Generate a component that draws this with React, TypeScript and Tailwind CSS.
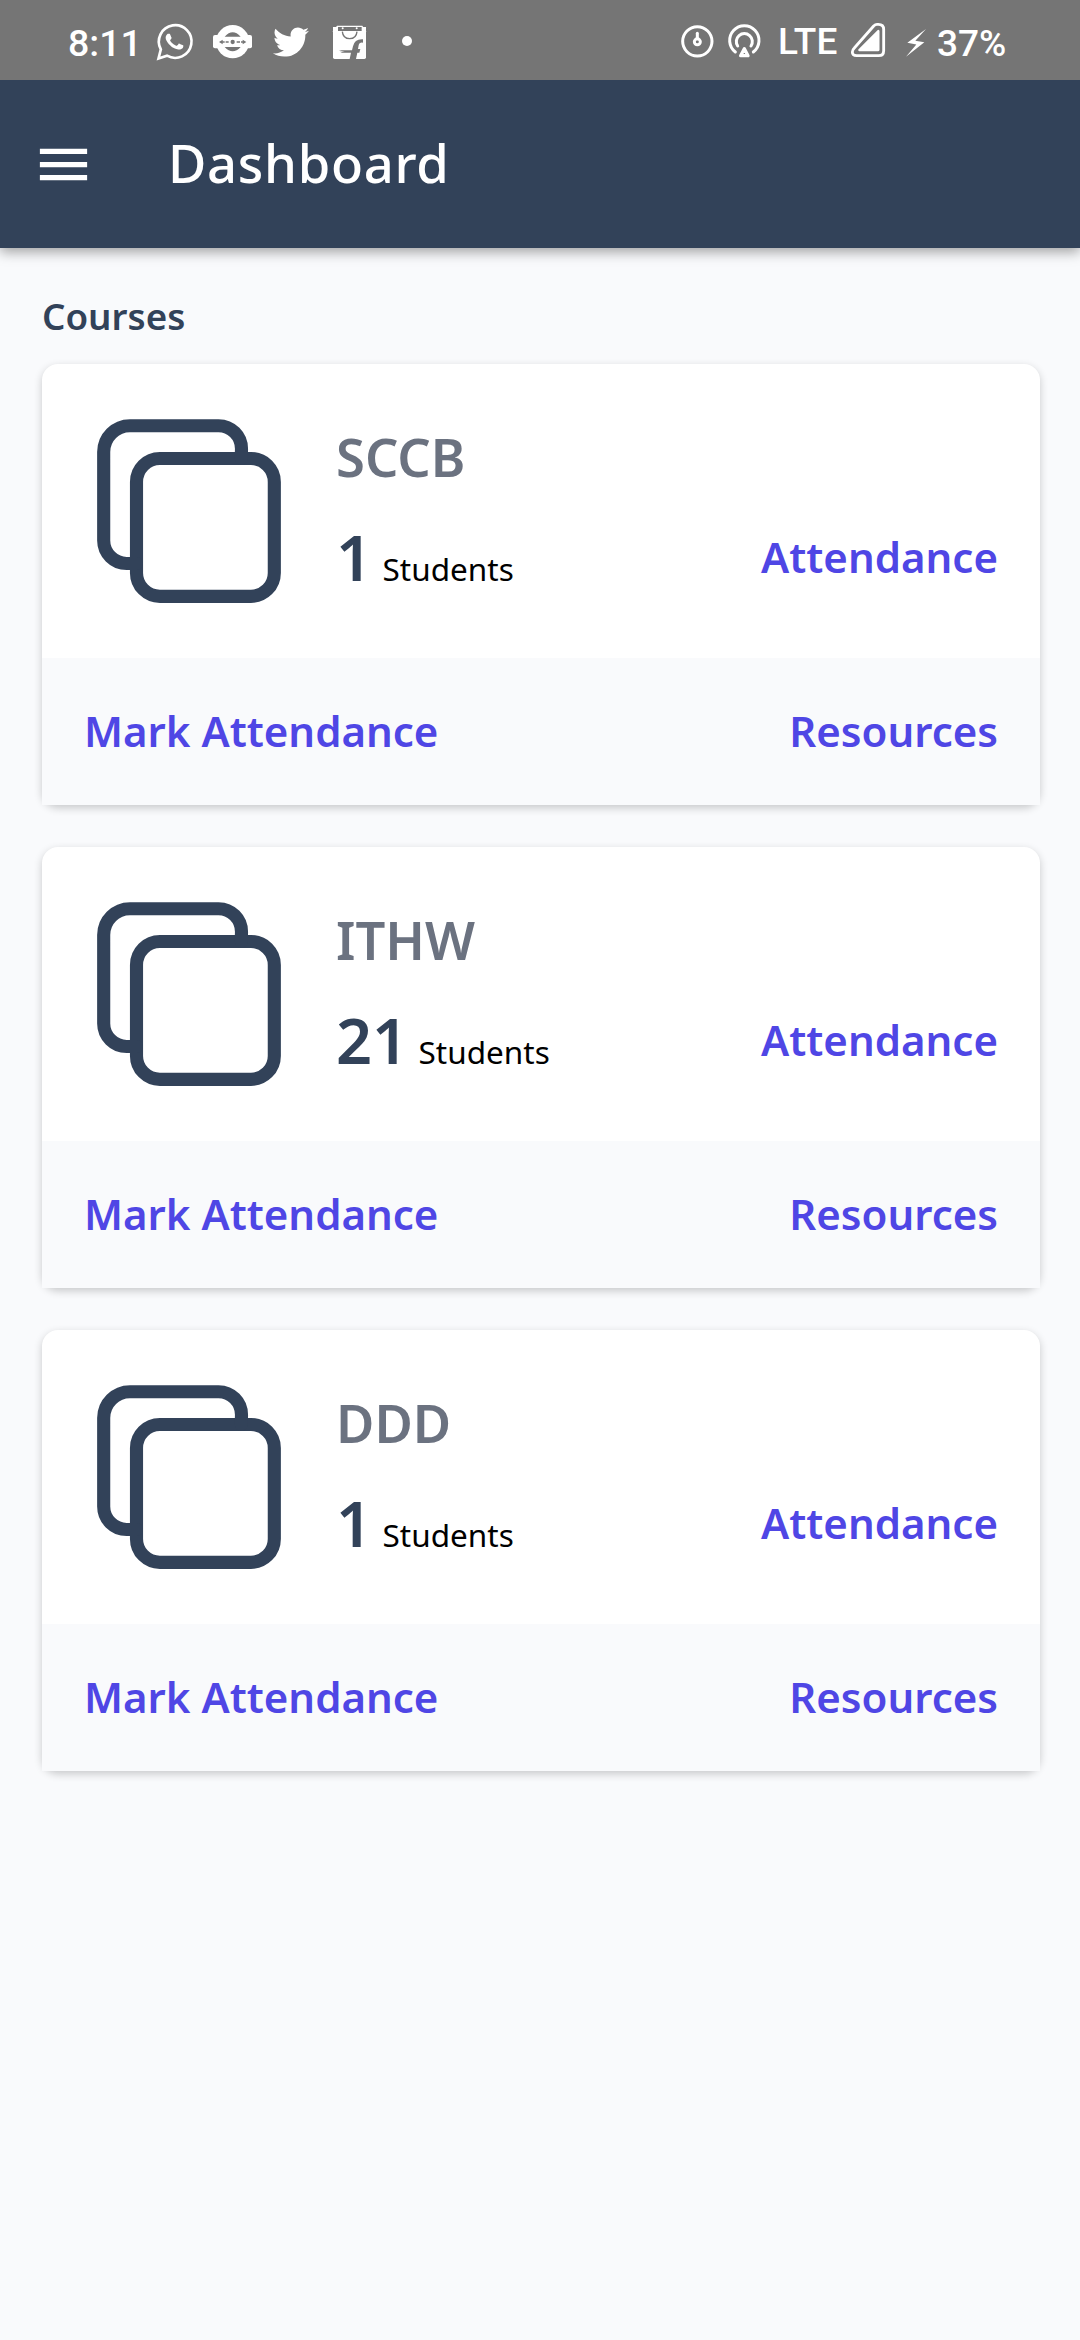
import React from 'react';
import { FaTwitter } from 'react-icons/fa';

interface Course {
  id: number;
  name: string;
  students: number;
}

const courses: Course[] = [
  { id: 1, name: 'SCCB', students: 1 },
  { id: 2, name: 'ITHW', students: 21 },
  { id: 3, name: 'DDD', students: 1 },
];

const WhatsAppIcon = () => (
  <svg viewBox="0 0 120 120" className="mt-[22px] h-10 w-10 shrink-0">
    <path
      d="M10.5 109.5 17.5 82A49 49 0 1 1 36 101Z"
      fill="none"
      stroke="white"
      strokeWidth="8"
    />
    <path
      transform="translate(5.5 8) scale(4.4 4.25)"
      fill="white"
      d="M17.472 14.382c-.297-.149-1.758-.867-2.03-.967-.273-.099-.471-.148-.67.15-.197.297-.767.966-.94 1.164-.173.199-.347.223-.644.075-.297-.15-1.255-.463-2.39-1.475-.883-.788-1.48-1.761-1.653-2.059-.173-.297-.018-.458.13-.606.134-.133.298-.347.446-.52.149-.174.198-.298.298-.497.099-.198.05-.371-.025-.52-.075-.149-.669-1.612-.916-2.207-.242-.579-.487-.5-.669-.51-.173-.008-.371-.01-.57-.01-.198 0-.52.074-.792.372-.272.297-1.04 1.016-1.04 2.479 0 1.462 1.065 2.875 1.213 3.074.149.198 2.096 3.2 5.077 4.487.709.306 1.262.489 1.694.625.712.227 1.36.195 1.871.118.571-.085 1.758-.719 2.006-1.413.248-.694.248-1.289.173-1.414-.074-.124-.272-.198-.57-.347"
    />
  </svg>
);

const MetroIcon = () => (
  <svg viewBox="0 0 120 120" className="mt-[22px] ml-[17px] h-10 w-10 shrink-0">
    <circle cx="62" cy="59" r="50" fill="white" />
    <rect x="3" y="39" width="117" height="40" rx="6" fill="white" />
    <path d="M38 44Q62 18 86 44ZM38 75Q62 101 86 75Z" fill="#757575" />
    <path d="M28 60H50M74 60H96" stroke="#757575" strokeWidth="4" strokeDasharray="10 3" />
    <path d="M21 60 32 53V67ZM103 60 92 53V67Z" fill="#757575" />
    <circle cx="62" cy="60" r="6.5" fill="#757575" />
  </svg>
);

const BagIcon = () => (
  <svg viewBox="0 0 120 120" className="mt-[22px] ml-[21px] h-10 w-10 shrink-0">
    <path d="M21 11H97L108 28V106Q108 111 103 111H14Q9 111 9 106V28Z" fill="white" />
    <path d="M24 15H95V27H24Z" fill="#757575" />
    <path d="M9 15H19V30H9ZM99 15H108V30H99Z" fill="white" />
    <circle cx="38" cy="19" r="3" fill="white" />
    <circle cx="80" cy="19" r="3" fill="white" />
    <path d="M37 29Q39 50 59 50Q79 50 81 29" fill="none" stroke="#757575" strokeWidth="4" />
    <path
      d="M99 52V62Q88 60 86 70L84 81H91L88 92H82L78 111H59L63 92H36L30 89H44L26 85H66L69 73Q74 50 99 52Z"
      fill="#757575"
    />
  </svg>
);

const DataSaverIcon = () => (
  <svg viewBox="0 0 120 120" className="mt-[22px] h-10 w-10 shrink-0" fill="none" stroke="white">
    <circle cx="58" cy="58" r="44" strokeWidth="9" />
    <circle cx="58" cy="59.5" r="9" strokeWidth="9" />
    <path d="M58 34V50" strokeWidth="9" strokeLinecap="round" />
  </svg>
);

const HotspotIcon = () => (
  <svg
    viewBox="0 0 120 120"
    className="mt-[22px] ml-[7px] h-10 w-10 shrink-0"
    fill="none"
    stroke="white"
    strokeWidth="9"
    strokeLinecap="round"
    strokeLinejoin="round"
  >
    <path d="M31 90A44 44 0 1 1 85 90" />
    <path d="M38 72A24 24 0 1 1 78 72" />
    <path d="M58 80 69 101H47Z" strokeWidth="10" />
  </svg>
);

const SignalIcon = () => (
  <svg viewBox="0 0 120 120" className="mt-[22px] h-10 w-10 shrink-0">
    <path
      d="M84 7H88Q104 7 104 22V86Q104 101 89 101H23Q10 101 10 90Q10 84 16 78L74 12Q79 7 84 7Z"
      fill="none"
      stroke="white"
      strokeWidth="8.5"
    />
    <path d="M88 27V84H31Z" fill="white" stroke="white" strokeWidth="7" strokeLinejoin="round" />
  </svg>
);

const BoltIcon = () => (
  <svg viewBox="0 0 78 120" className="mt-[22px] ml-[15px] h-10 w-[26px] shrink-0">
    <path d="M66 21 10 62 37 67.500 6 104 61 61 34 56Z" fill="white" />
  </svg>
);

const CopyIcon = () => (
  <svg
    viewBox="0 0 512 512"
    className="h-[210px] w-[210px] shrink-0"
    fill="none"
    stroke="#324259"
    strokeWidth="32"
    strokeLinejoin="round"
  >
    <rect x="128" y="128" width="336" height="336" rx="57" ry="57" />
    <path
      d="M383.500 128l.5-24a56.160 56.160 0 00-56-56H112a64.190 64.190 0 00-64 64v216a56.160 56.160 0 0056 56h24"
      strokeLinecap="round"
    />
  </svg>
);

const StatusBar = () => (
  <div className="relative z-10 flex h-20 items-start bg-[#757575] pl-[68px] pr-[73px] font-[Roboto,sans-serif] text-[37px] leading-none font-medium text-white">
    <span className="mt-[25px] w-[87px] shrink-0 text-[37.500px]">8:11</span>
    <WhatsAppIcon />
    <MetroIcon />
    <FaTwitter className="mt-6 ml-[21px] h-9 w-9 shrink-0" />
    <BagIcon />
    <span className="mt-9 ml-8 h-2.5 w-2.5 rounded-full bg-white" />
    <div className="ml-auto flex items-start">
      <DataSaverIcon />
      <HotspotIcon />
      <span className="mt-[23px] ml-[13px] w-[71px] tracking-[0.3px]">LTE</span>
      <SignalIcon />
      <BoltIcon />
      <span className="mt-[25px] ml-[7px] w-[70px]">37%</span>
    </div>
  </div>
);

const Header = () => (
  <header className="relative flex h-[168px] items-center bg-[#324259] pl-[31.500px] text-white shadow-[0_4px_12px_rgba(0,0,0,0.36)]">
    <button aria-label="Open menu" className="mt-px">
      <svg viewBox="0 0 24 24" className="h-[63px] w-[63px]" fill="currentColor">
        <path d="M3 18h18v-2H3v2zm0-5h18v-2H3v2zm0-7v2h18V6H3z" />
      </svg>
    </button>
    <h1 className="-mt-0.5 ml-[73.500px] text-[52.500px] font-medium tracking-[0.7px]">Dashboard</h1>
  </header>
);

const CourseCard: React.FC<{ course: Course }> = ({ course }) => (
  <div className="rounded-2xl bg-white shadow-[0_3px_8px_rgba(0,0,0,0.2)]">
    <div className="flex h-[294px] items-start p-[42px]">
      <CopyIcon />
      <div className="ml-[42px] flex-1 pt-[15px]">
        <h3 className="text-[52.500px] leading-[71px] font-semibold text-[#6b7280]">{course.name}</h3>
        <div className="mt-[22px] flex items-baseline justify-between">
          <p className="flex items-baseline gap-[10.500px]">
            <span className="text-[63px] leading-[86px] font-semibold text-[#324259]">
              {course.students}
            </span>
            <span className="text-[31.500px] text-black">Students</span>
          </p>
          <button className="self-start pt-[14px] text-[42px] font-semibold text-[#4f46e5]">
            Attendance
          </button>
        </div>
      </div>
    </div>
    <div className="flex h-[147px] items-center justify-between bg-[#f9fafc] px-[42px] pb-[2px] text-[42px] font-semibold text-[#4f46e5]">
      <button>Mark Attendance</button>
      <button>Resources</button>
    </div>
  </div>
);

export default function App() {
  return (
    <div className="h-[2340px] w-[1080px] overflow-hidden bg-[#f9fafc] font-['Noto_Sans',sans-serif] leading-[1.362]">
      <StatusBar />
      <Header />
      <main className="pt-[42px] pr-10 pl-[42px]">
        <h2 className="text-[36.750px] leading-[52px] font-semibold text-[#324259]">Courses</h2>
        <div className="mt-[22px] flex flex-col gap-[42px]">
          {courses.map((course) => (
            <CourseCard key={course.id} course={course} />
          ))}
        </div>
      </main>
    </div>
  );
}
